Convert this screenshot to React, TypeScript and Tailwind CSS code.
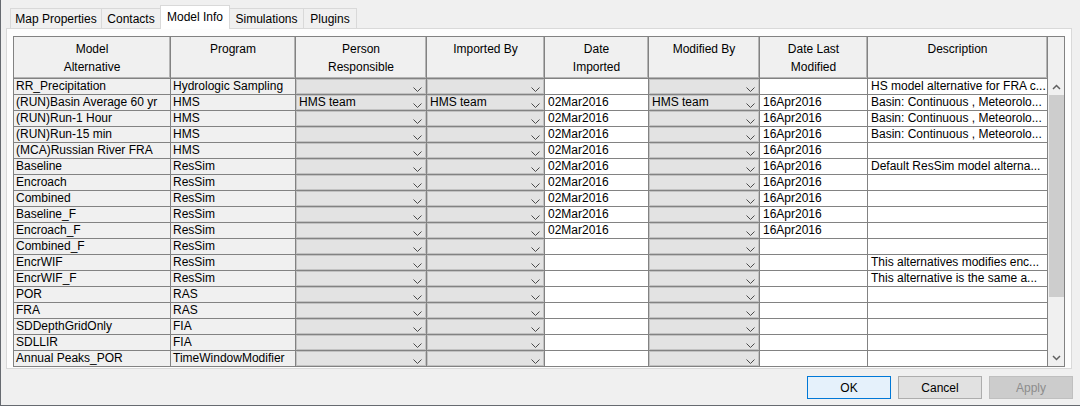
import React from "react";

type Row = [string, string, string, string, string, string, string, string];

const rows: Row[] = [
  ["RR_Precipitation", "Hydrologic Sampling", "", "", "", "", "", "HS model alternative for FRA c..."],
  ["(RUN)Basin Average 60 yr", "HMS", "HMS team", "HMS team", "02Mar2016", "HMS team", "16Apr2016", "Basin: Continuous , Meteorolo..."],
  ["(RUN)Run-1 Hour", "HMS", "", "", "02Mar2016", "", "16Apr2016", "Basin: Continuous , Meteorolo..."],
  ["(RUN)Run-15 min", "HMS", "", "", "02Mar2016", "", "16Apr2016", "Basin: Continuous , Meteorolo..."],
  ["(MCA)Russian River FRA", "HMS", "", "", "02Mar2016", "", "16Apr2016", ""],
  ["Baseline", "ResSim", "", "", "02Mar2016", "", "16Apr2016", "Default ResSim model alterna..."],
  ["Encroach", "ResSim", "", "", "02Mar2016", "", "16Apr2016", ""],
  ["Combined", "ResSim", "", "", "02Mar2016", "", "16Apr2016", ""],
  ["Baseline_F", "ResSim", "", "", "02Mar2016", "", "16Apr2016", ""],
  ["Encroach_F", "ResSim", "", "", "02Mar2016", "", "16Apr2016", ""],
  ["Combined_F", "ResSim", "", "", "", "", "", ""],
  ["EncrWIF", "ResSim", "", "", "", "", "", "This alternatives modifies enc..."],
  ["EncrWIF_F", "ResSim", "", "", "", "", "", "This alternative is the same a..."],
  ["POR", "RAS", "", "", "", "", "", ""],
  ["FRA", "RAS", "", "", "", "", "", ""],
  ["SDDepthGridOnly", "FIA", "", "", "", "", "", ""],
  ["SDLLIR", "FIA", "", "", "", "", "", ""],
  ["Annual Peaks_POR", "TimeWindowModifier", "", "", "", "", "", ""],
];

const kinds = ["g", "g", "c", "c", "w", "c", "w", "w"];

const headers: string[][] = [
  ["Model", "Alternative"],
  ["Program"],
  ["Person", "Responsible"],
  ["Imported By"],
  ["Date", "Imported"],
  ["Modified By"],
  ["Date Last", "Modified"],
  ["Description"],
];

const tabs = [
  { label: "Map Properties", w: "w-[92px]" },
  { label: "Contacts", w: "w-[60px]" },
  { label: "Model Info", w: "w-[70px]", selected: true },
  { label: "Simulations", w: "w-[75px]" },
  { label: "Plugins", w: "w-[54px]" },
];

const gridCols = "grid grid-cols-[157px_125px_131px_118px_104px_111px_108px_180px]";

function Chevron() {
  return (
    <svg width="9" height="5" viewBox="0 0 9 5" className="absolute right-[4px] top-[8px]">
      <polyline points="0.5,0.5 4.5,4.5 8.5,0.5" fill="none" stroke="#4a4a4a" strokeWidth="1" />
    </svg>
  );
}

function Cell({ kind, text, last }: { kind: string; text: string; last: boolean }) {
  const base = `relative border-r border-[#828282] ${last ? "h-[15px]" : "h-[16px] border-b"} leading-[15px] whitespace-nowrap overflow-hidden text-black`;
  if (kind === "c") {
    return (
      <div className={`${base} bg-[#e3e3e3] shadow-[inset_0_0_0_1px_#c2c2c2] pl-[3px]`}>
        {text}
        <Chevron />
      </div>
    );
  }
  if (kind === "g") {
    return <div className={`${base} bg-[#f0f0f0] pl-[2px]`}>{text}</div>;
  }
  return <div className={`${base} bg-white pl-[3px]`}>{text}</div>;
}

export default function App() {
  return (
    <div
      className="w-[1080px] h-[406px] bg-[#f0f0f0] border-l border-b border-[#666a70] flex flex-col text-[12px] text-black"
      style={{ fontFamily: '"Liberation Sans", Arial, sans-serif' }}
    >
      {/* Tabs */}
      <div className="mt-[5px] h-[23px] pl-[9px] flex items-end">
        {tabs.map((t, i) =>
          t.selected ? (
            <div
              key={t.label}
              className={`${t.w} ${i > 0 ? "-ml-px" : ""} h-[24px] -mb-px relative z-10 bg-white border-l border-t border-r border-[#d9d9d9] flex items-center justify-center pb-[2px]`}
            >
              {t.label}
            </div>
          ) : (
            <div
              key={t.label}
              className={`${t.w} ${i > 0 ? "-ml-px" : ""} h-[20px] bg-[#f0f0f0] border-l border-t border-r border-[#d9d9d9] flex items-center justify-center`}
            >
              {t.label}
            </div>
          )
        )}
      </div>

      {/* Panel */}
      <div className="ml-[5px] w-[1066px] border border-[#d9d9d9] bg-[#fdfdfd] px-[6px] pt-[7px] pb-[1px]">
        <div className="w-[1052px] border border-[#828282] bg-[#f0f0f0] flex">
          <div className="w-[1034px]">
            {/* Header */}
            <div className={gridCols}>
              {headers.map((h, i) => (
                <div
                  key={i}
                  className="h-[42px] border-r border-b border-[#828282] bg-[#f0f0f0] shadow-[inset_-1px_-1px_0_#b4b4b4] flex flex-col items-center pt-[3px] leading-[18px]"
                >
                  {h.map((l) => (
                    <span key={l}>{l}</span>
                  ))}
                </div>
              ))}
            </div>
            {/* Rows */}
            {rows.map((r, ri) => (
              <div key={ri} className={gridCols}>
                {r.map((c, ci) => (
                  <Cell key={ci} kind={kinds[ci]} text={c} last={ri === rows.length - 1} />
                ))}
              </div>
            ))}
          </div>
          {/* Scrollbar */}
          <div className="w-[16px] flex flex-col bg-[#f0f0f0]">
            <div className="h-[42px]" />
            <div className="h-[16px] flex items-center justify-center">
              <svg width="9" height="6" viewBox="0 0 9 6">
                <polyline points="1,5 4.5,1.5 8,5" fill="none" stroke="#606060" strokeWidth="1.5" />
              </svg>
            </div>
            <div className="h-[202px] ml-[1px] w-[15px] bg-[#cdcdcd]" />
            <div className="flex-1" />
            <div className="h-[16px] flex items-center justify-center">
              <svg width="9" height="6" viewBox="0 0 9 6">
                <polyline points="1,1 4.5,4.5 8,1" fill="none" stroke="#606060" strokeWidth="1.5" />
              </svg>
            </div>
          </div>
        </div>
      </div>

      {/* Buttons */}
      <div className="mt-[7px] flex justify-end gap-[7px] pr-[7px]">
        <button className="w-[84px] h-[23px] border border-[#0078d7] bg-[#e5f1fb] text-black flex items-center justify-center">
          OK
        </button>
        <button className="w-[84px] h-[23px] border border-[#adadad] bg-[#e1e1e1] text-black flex items-center justify-center">
          Cancel
        </button>
        <button className="w-[84px] h-[23px] border border-[#bfbfbf] bg-[#cccccc] text-[#8c8c8c] flex items-center justify-center">
          Apply
        </button>
      </div>
    </div>
  );
}
